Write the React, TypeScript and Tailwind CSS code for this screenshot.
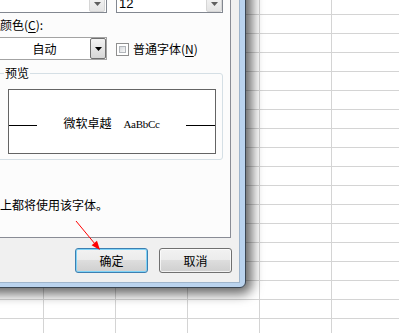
import React from "react";

function ScrollDown({ className = "" }: { className?: string }) {
  return (
    <div
      className={
        "w-[16px] h-[16px] rounded-[2px] border border-[#d6d6d6] bg-[linear-gradient(to_bottom,#f4f4f4,#e4e4e4)] flex items-center justify-center " +
        className
      }
    >
      <svg width="7" height="4" viewBox="0 0 7 4">
        <path d="M0 0H7L3.5 4Z" fill="#5f5f5f" />
      </svg>
    </div>
  );
}

export default function App() {
  return (
    <div className="relative w-[399px] h-[333px] overflow-hidden bg-white bg-[linear-gradient(to_right,#d4d4d4_1px,transparent_1px),linear-gradient(to_bottom,#d4d4d4_1px,transparent_1px)] bg-size-[72px_19px] bg-position-[43px_14px] font-['Noto_Sans_CJK_SC',sans-serif] text-[12px] text-black">
      {/* dialog window */}
      <div className="absolute left-[-16px] top-[-40px] w-[262px] h-[328px] flex flex-col rounded-br-[6px] border border-[#3b4652] bg-[#bad3ee] pt-[5px] pl-[5px] pr-[5px] pb-[4px] shadow-[2px_2px_12px_4px_rgba(0,0,0,0.6)]">
        <div className="flex-1 flex flex-col border border-[#9fb5cc] bg-[#f0f0f0]">
          {/* tab page */}
          <div className="mt-[12px] ml-[1px] mr-[8px] h-[259px] border border-[#898c95] bg-[#fcfcfc] flex flex-col">
            {/* list boxes bottoms */}
            <div className="mt-[5px] flex">
              <div className="ml-[5px] w-[109px] h-[28px] border border-[#828790] bg-white flex justify-end items-end">
                <ScrollDown className="mr-[1px]" />
              </div>
              <div className="ml-[9px] w-[107px] h-[28px] border border-[#828790] bg-white flex items-end">
                <div className="flex-1 pl-[2px] leading-[16px] font-['Liberation_Sans',sans-serif] text-[13px]">12</div>
                <ScrollDown />
              </div>
            </div>
            {/* colour label */}
            <div className="mt-[4px] ml-[7px] leading-[16px]">
              颜色(<span className="underline underline-offset-[2px]">C</span>):
            </div>
            {/* colour combo + checkbox */}
            <div className="mt-[4px] flex items-center">
              <div className="ml-[5px] w-[109px] h-[23px] border border-[#a3a3a3] bg-white flex">
                <div className="flex-1 flex items-center justify-center leading-[16px]">自动</div>
                <div className="w-[16px] h-full rounded-[2px] border border-[#6f6f6f] bg-[linear-gradient(to_bottom,#f3f3f3,#d6d6d6)] flex items-center justify-center">
                  <svg width="7" height="4" viewBox="0 0 7 4">
                    <path d="M0 0H7L3.5 4Z" fill="#000" />
                  </svg>
                </div>
              </div>
              <div className="ml-[9px] mt-[2px] w-[13px] h-[13px] border border-[#8f8f8f] bg-white p-[2px]">
                <div className="w-full h-full border border-[#b2b6bb] bg-[linear-gradient(135deg,#d5d8dc,#f9f9f9)]" />
              </div>
              <div className="ml-[4px] leading-[16px]">
                普通字体(<span className="underline underline-offset-[2px]">N</span>)
              </div>
            </div>
            {/* preview group */}
            <div className="relative mt-[13px] ml-[3px] w-[227px] h-[87px] rounded-[3px] border border-[#d5dfe5]">
              <div className="absolute left-[7px] top-[-9px] px-[1px] bg-[#fcfcfc] leading-[16px]">预览</div>
              <div className="mt-[15px] ml-[11px] w-[208px] h-[65px] border border-[#646464] bg-white flex">
                <div className="w-[28px] h-px mt-[35px] bg-black" />
                <div className="flex-1 mt-[25px] flex justify-center items-baseline gap-[12px] leading-[16px] h-[16px]">
                  <span>微软卓越</span>
                  <span className="font-['Liberation_Serif',serif] text-[11px] tracking-[-0.3px]">AaBbCc</span>
                </div>
                <div className="w-[29px] h-px mt-[35px] bg-black" />
              </div>
            </div>
            {/* info text */}
            <div className="mt-[37px] ml-[7px] leading-[16px]">上都将使用该字体。</div>
          </div>
          {/* buttons */}
          <div className="mt-[10px] flex justify-end gap-[11px] pr-[7px]">
            <button className="w-[73px] h-[25px] rounded-[3px] border border-[#3c7fb1] bg-[linear-gradient(to_bottom,#f2f2f2_0%,#ebebeb_50%,#dddddd_50%,#cfcfcf_100%)] shadow-[inset_0_0_0_1px_#7fd3f7] leading-[16px] font-['Noto_Sans_CJK_SC',sans-serif] text-[12px]">
              确定
            </button>
            <button className="w-[73px] h-[25px] rounded-[3px] border border-[#707070] bg-[linear-gradient(to_bottom,#f2f2f2_0%,#ebebeb_50%,#dddddd_50%,#cfcfcf_100%)] shadow-[inset_0_0_0_1px_rgba(255,255,255,0.7)] leading-[16px] font-['Noto_Sans_CJK_SC',sans-serif] text-[12px]">
              取消
            </button>
          </div>
        </div>
      </div>
      {/* red annotation arrow */}
      <svg className="absolute left-0 top-0 pointer-events-none" width="399" height="333" viewBox="0 0 399 333">
        <line x1="76" y1="221" x2="94.3" y2="243.1" stroke="#ff0000" strokeWidth="1" />
        <polygon points="100,250 91.6,245.3 97,240.8" fill="#ff0000" />
      </svg>
    </div>
  );
}
